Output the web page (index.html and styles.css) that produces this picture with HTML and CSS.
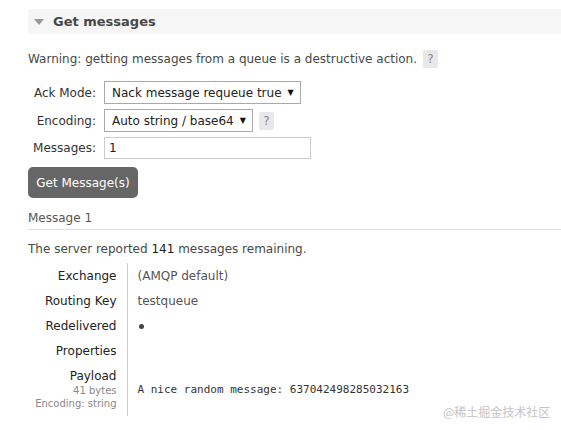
FILE: index.html
```html
<!DOCTYPE html>
<html>
<head>
<meta charset="utf-8">
<link rel="stylesheet" href="styles.css">
</head>
<body>
<div class="page">
  <div class="section-head"><span class="tri"></span><h2>Get messages</h2></div>
  <div class="section-body">
    <p class="warning">Warning: getting messages from a queue is a destructive action.<span class="help">?</span></p>
    <div class="form">
      <label class="lbl">Ack Mode:</label>
      <div class="field"><span class="select">Nack message requeue true<span class="arrow">▼</span></span></div>
      <label class="lbl">Encoding:</label>
      <div class="field"><span class="select">Auto string / base64<span class="arrow">▼</span></span><span class="help">?</span></div>
      <label class="lbl">Messages:</label>
      <div class="field"><span class="input">1</span></div>
    </div>
    <button class="btn">Get Message(s)</button>
    <h3 class="msg-title">Message 1</h3>
    <p class="remaining">The server reported <b>141</b> messages remaining.</p>
    <table class="facts">
      <tr><th>Exchange</th><td>(AMQP default)</td></tr>
      <tr><th>Routing Key</th><td>testqueue</td></tr>
      <tr><th>Redelivered</th><td><span class="dot"></span></td></tr>
      <tr><th>Properties</th><td></td></tr>
      <tr class="payload"><th>Payload<sub>41 bytes</sub><sub>Encoding: string</sub></th><td><pre>A nice random message: 637042498285032163</pre></td></tr>
    </table>
  </div>
  <div class="watermark">@稀土掘金技术社区</div>
</div>
</body>
</html>
```
FILE: styles.css
```css
* { box-sizing: border-box; }
html, body { margin: 0; padding: 0; background: #fff; }
body {
  font-family: "DejaVu Sans", Verdana, sans-serif;
  font-size: 12px;
  color: #484848;
}
.page { position: relative; width: 561px; height: 430px; padding: 9px 0 0 28px; }
.section-head {
  height: 25px;
  background: #f6f6f6;
  border-radius: 4px 0 0 4px;
  display: flex;
  align-items: center;
  padding-left: 6px;
}
.tri {
  width: 0; height: 0;
  border-left: 5px solid transparent;
  border-right: 5px solid transparent;
  border-top: 6px solid #999;
  margin-right: 9px;
}
.section-head h2 { margin: 0; font-size: 13px; font-weight: bold; color: #484848; }
.section-body { padding-top: 16px; }
.warning { margin: 0; line-height: 18px; display: flex; align-items: center; }
.help {
  display: inline-block;
  width: 15px; height: 18px;
  background: #e8e8e8;
  color: #888;
  text-align: center;
  line-height: 18px;
  border-radius: 2px;
  margin-left: 6px;
}
.form {
  display: grid;
  grid-template-columns: 68px auto;
  column-gap: 8px;
  row-gap: 5px;
  margin-top: 13px;
  align-items: center;
}
.lbl { text-align: right; color: #333; }
.field { display: flex; align-items: center; }
.select {
  display: inline-flex;
  align-items: center;
  height: 23px;
  border: 1px solid #a9a9a9;
  background: #fff;
  color: #222;
  font-size: 12px;
  padding: 0 6px 0 7px;
  white-space: pre;
}
.arrow { font-size: 8px; margin-left: 6px; color: #111; }
.input {
  display: flex;
  align-items: center;
  width: 207px;
  height: 22px;
  border: 1px solid #ccc;
  padding-left: 4px;
  color: #222;
  font-size: 12px;
}
.btn {
  display: block;
  margin-top: 8px;
  width: 110px;
  height: 31px;
  border: 0;
  border-radius: 5px;
  background: #666;
  color: #fff;
  font-family: inherit;
  font-size: 12px;
  padding: 0;
}
.msg-title {
  margin: 12px 0 0;
  font-size: 12px;
  font-weight: normal;
  color: #555;
  line-height: 16px;
  padding-bottom: 3px;
  border-bottom: 1px solid #ddd;
}
.remaining { margin: 11px 0 0; line-height: 16px; }
.remaining b { font-weight: normal; color: #222; }
.facts { border-collapse: collapse; margin-top: 6px; }
.facts th {
  width: 99px;
  text-align: right;
  font-weight: normal;
  color: #222;
  padding: 0 10px 0 0;
  border-right: 1px solid #ccc;
  height: 25px;
  vertical-align: middle;
}
.facts td { padding: 0 0 0 10px; color: #555; vertical-align: middle; }
.dot { display: inline-block; width: 5px; height: 5px; border-radius: 50%; background: #444; vertical-align: middle; margin-left: 1px; }
.facts .payload th { padding-top: 6px; padding-bottom: 6px; line-height: 15px; vertical-align: top; }
.facts sub { display: block; font-size: 10px; line-height: 13px; color: #888; vertical-align: baseline; }
.facts pre { margin: 0; font-family: "DejaVu Sans Mono", monospace; font-size: 11px; color: #333; }
.watermark {
  position: absolute;
  left: 443px;
  top: 403px;
  font-family: "Noto Sans CJK SC", sans-serif;
  font-size: 12px;
  color: #c4c4c4;
}
```
